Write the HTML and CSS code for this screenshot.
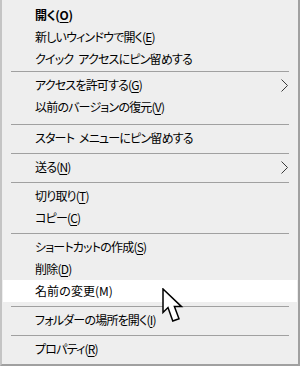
FILE: index.html
```html
<!DOCTYPE html>
<html lang="ja">

<head>
    <meta charset="UTF-8">
    <meta name="viewport" content="width=device-width, initial-scale=1.0">
    <title>コンテキスト メニュー</title>
    <link rel="stylesheet" href="styles.css">
</head>

<body>
    <ul class="menu">
        <li class="item default"><span>開く(<u>O</u>)</span></li>
        <li class="item"><span>新しいウィンドウで開く(<u>E</u>)</span></li>
        <li class="item"><span>クイック アクセスにピン留めする</span></li>
        <li class="sep sep-first"></li>
        <li class="item"><span>アクセスを許可する(<u>G</u>)</span>
            <svg class="arrow" width="8" height="13" viewBox="0 0 8 13"><polyline points="0.5,0.5 6.5,6.5 0.5,12.5" /></svg>
        </li>
        <li class="item"><span>以前のバージョンの復元(<u>V</u>)</span></li>
        <li class="sep sep-wide"></li>
        <li class="item"><span>スタート メニューにピン留めする</span></li>
        <li class="sep"></li>
        <li class="item"><span>送る(<u>N</u>)</span>
            <svg class="arrow" width="8" height="13" viewBox="0 0 8 13"><polyline points="0.5,0.5 6.5,6.5 0.5,12.5" /></svg>
        </li>
        <li class="sep"></li>
        <li class="item"><span>切り取り(<u>T</u>)</span></li>
        <li class="item"><span>コピー(<u>C</u>)</span></li>
        <li class="sep"></li>
        <li class="item"><span>ショートカットの作成(<u>S</u>)</span></li>
        <li class="item"><span>削除(<u>D</u>)</span></li>
        <li class="item hover"><span>名前の変更(M)</span></li>
        <li class="sep"></li>
        <li class="item"><span>フォルダーの場所を開く(<u>I</u>)</span></li>
        <li class="sep"></li>
        <li class="item"><span>プロパティ(<u>R</u>)</span></li>
    </ul>

    <!-- mouse pointer over the hovered row -->
    <svg class="cursor" width="22" height="36" viewBox="0 0 22 36">
        <polygon points="1,1 1,24.5 6,19.5 10.8,33 17,30.8 12.4,18.6 19.5,18.6" />
    </svg>
</body>
</html>
```

FILE: styles.css
```css
body {
    margin: 0;
    padding: 0;
    width: 300px;
    height: 366px;
    position: relative;
    overflow: hidden;
    font-family: "Noto Sans CJK JP", "Noto Sans", sans-serif;
    font-size: 12px;
    color: #000;
}
.menu {
    list-style: none;
    margin: 0;
    padding: 4px 1px 4px 1px;
    height: 366px;
    box-sizing: border-box;
    background: #eeeeee;
    border-left: 2px solid #c4c4c4;
    border-right: 2px solid #a0a0a0;
    border-bottom: 2px solid #a0a0a0;
    display: flex;
    flex-direction: column;
}
.item {
    height: 22px;
    line-height: 22px;
    padding: 0 8px 0 32px;
    display: flex;
    align-items: center;
    white-space: nowrap;
    font-feature-settings: "palt";
    letter-spacing: -0.8px;
    word-spacing: 3px;
}
.item u {
    text-decoration-thickness: 1px;
    text-underline-offset: 2px;
}
.default {
    font-weight: bold;
    letter-spacing: -0.3px;
}
.hover {
    background: #ffffff;
    font-feature-settings: normal;
    letter-spacing: 0;
}
.arrow {
    margin-left: auto;
    fill: none;
    stroke: #3a3a3a;
    stroke-width: 1;
}
.sep {
    height: 1px;
    margin: 4px 8px 2px 8px;
    background: #a0a0a0;
}
.sep-first {
    margin-top: 1px;
}
.sep-wide {
    margin-top: 6px;
}
.cursor {
    position: absolute;
    left: 162px;
    top: 288px;
}
.cursor polygon {
    fill: #fff;
    stroke: #000;
    stroke-width: 1.5;
    stroke-linejoin: miter;
}
```
